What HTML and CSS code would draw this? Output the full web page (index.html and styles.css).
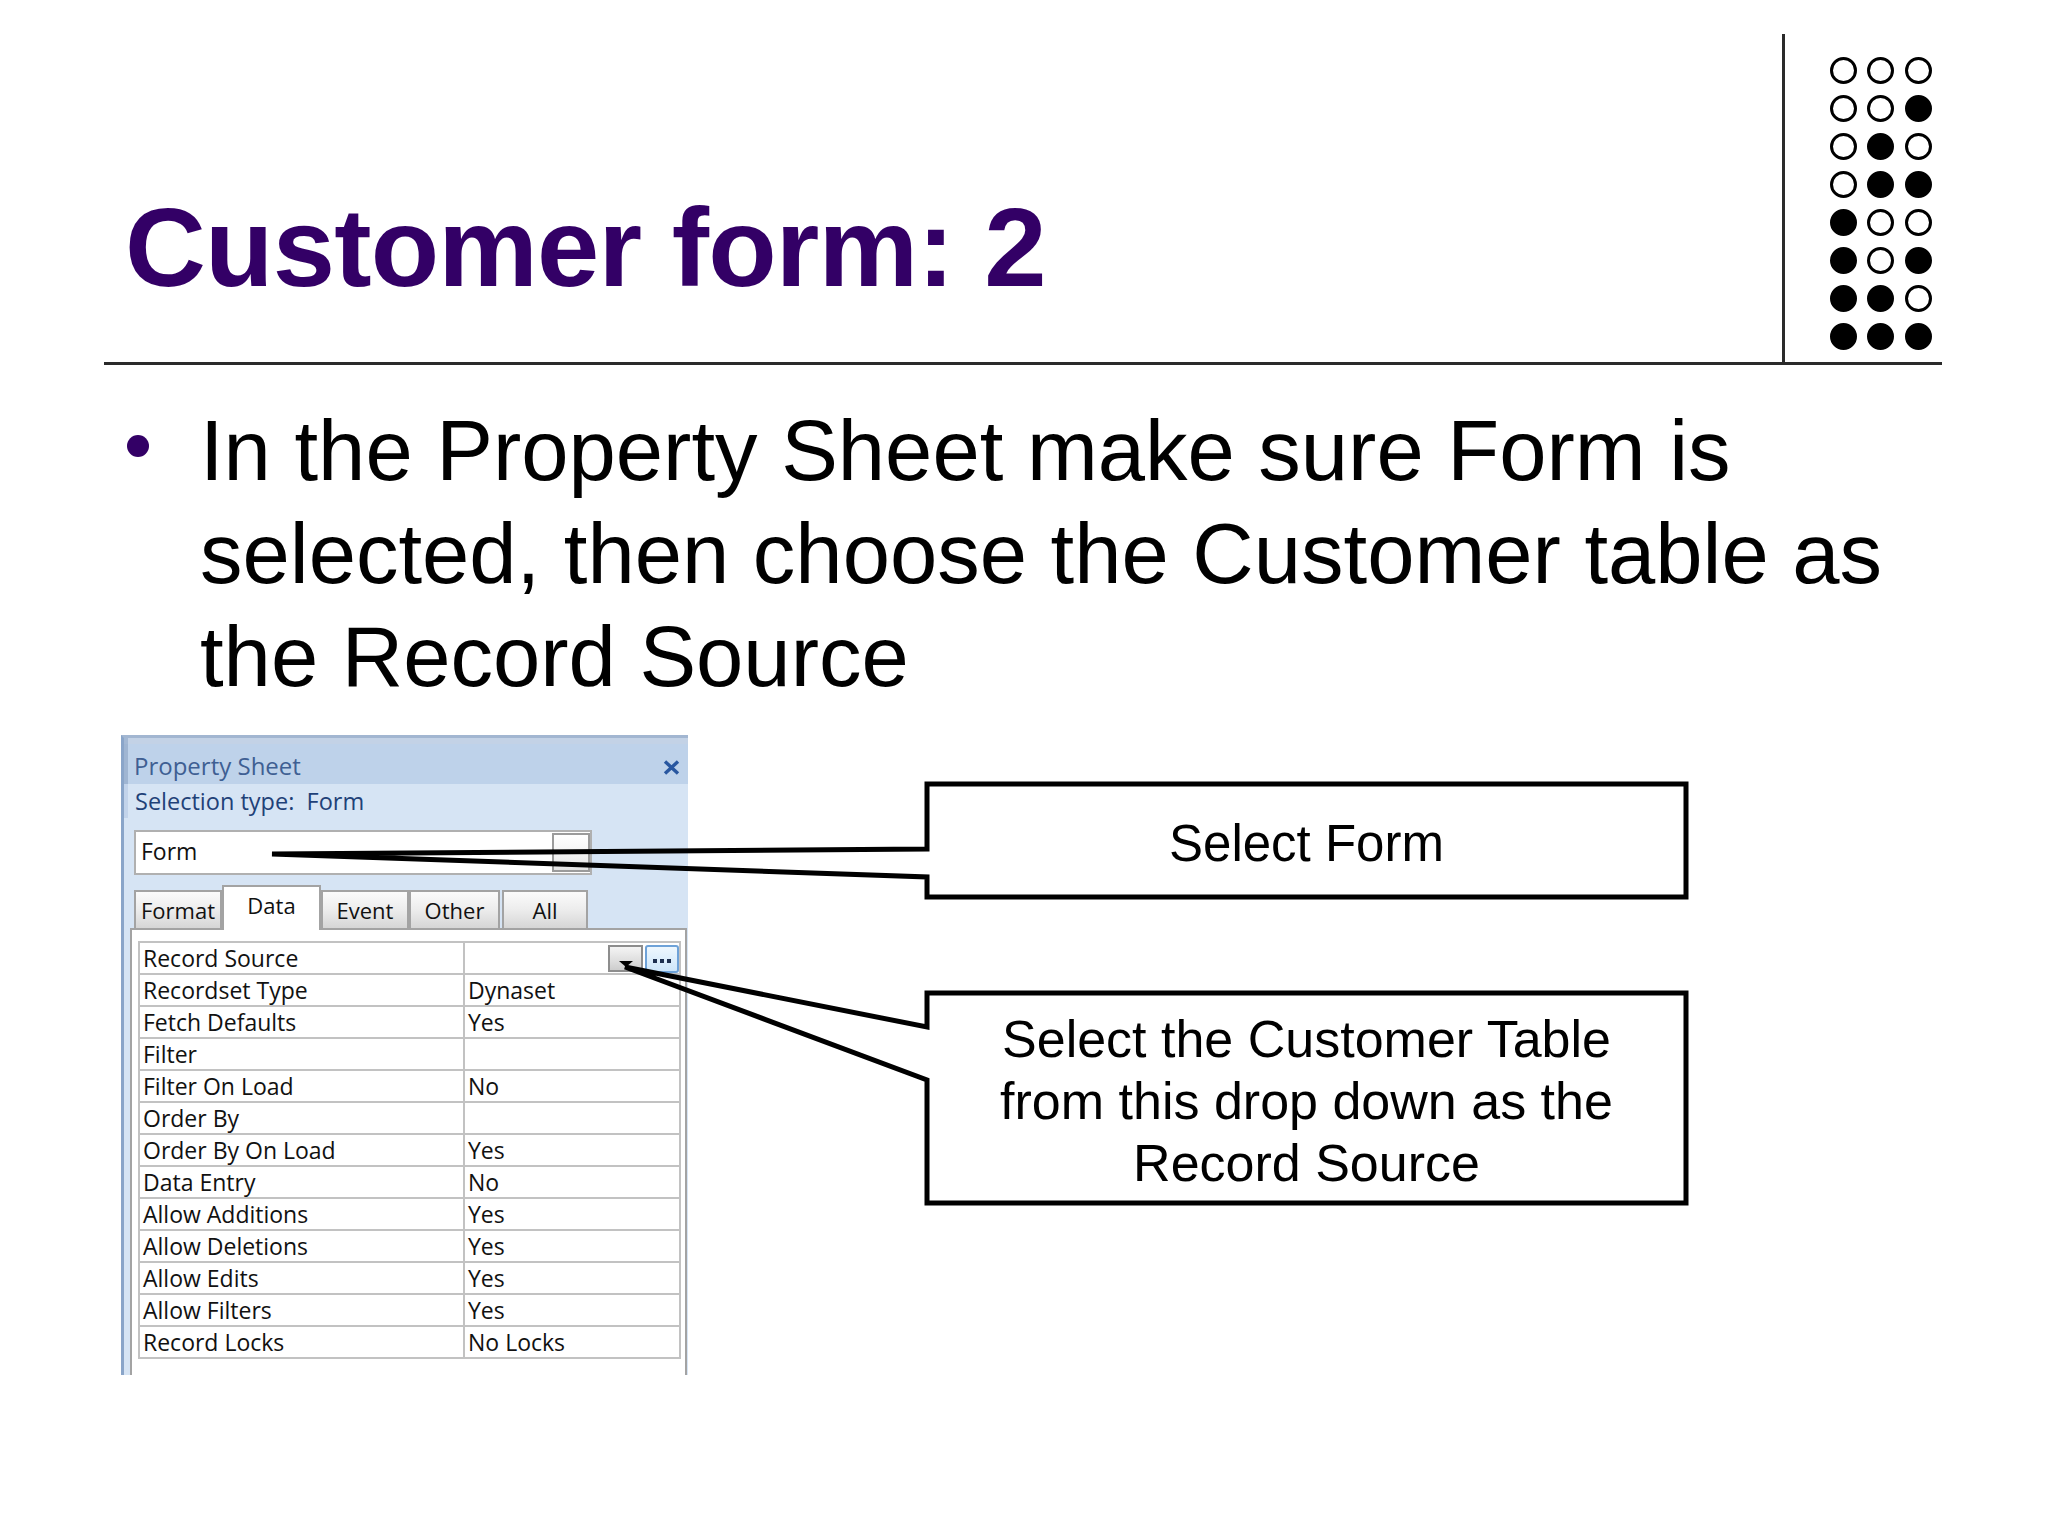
FILE: index.html
```html
<!DOCTYPE html>
<html lang="en">
<head>
<meta charset="utf-8">
<title>Customer form: 2</title>
<link rel="stylesheet" href="styles.css">
</head>
<body>
<div class="slide">
  <header class="header">
    <div class="title-area"><h1 class="title">Customer form: 2</h1></div>
    <div class="vrule"></div>
    <div class="dots">
      <span class="dot"></span><span class="dot"></span><span class="dot"></span>
      <span class="dot"></span><span class="dot"></span><span class="dot on"></span>
      <span class="dot"></span><span class="dot on"></span><span class="dot"></span>
      <span class="dot"></span><span class="dot on"></span><span class="dot on"></span>
      <span class="dot on"></span><span class="dot"></span><span class="dot"></span>
      <span class="dot on"></span><span class="dot"></span><span class="dot on"></span>
      <span class="dot on"></span><span class="dot on"></span><span class="dot"></span>
      <span class="dot on"></span><span class="dot on"></span><span class="dot on"></span>
    </div>
  </header>

  <div class="bullet-item">
    <span class="bullet"></span>
    <p class="bullet-text">In the Property Sheet make sure Form is selected, then choose the Customer table as the Record Source</p>
  </div>

  <div class="ps">
    <div class="ps-strip"></div>
    <div class="ps-title">
      <span class="ps-title-text">Property Sheet</span>
      <svg class="ps-close" width="17" height="15" viewBox="0 0 17 15"><path d="M2 1.5 L15 13.5 M15 1.5 L2 13.5" stroke="#2957a0" stroke-width="3.4" fill="none"/></svg>
    </div>
    <div class="ps-sel">Selection type:&nbsp; Form</div>
    <div class="ps-box">
      <span class="ps-box-text">Form</span>
      <span class="ps-box-btn"></span>
    </div>
    <div class="ps-tabs">
      <div class="tab t-format">Format</div>
      <div class="tab active t-data">Data</div>
      <div class="tab t-event">Event</div>
      <div class="tab t-other">Other</div>
      <div class="tab t-all">All</div>
    </div>
    <div class="ps-content">
      <div class="grid">
        <div class="row"><div class="k">Record Source</div><div class="v btns"><span class="dd"><span class="tri"></span></span><span class="ell"><i></i><i></i><i></i></span></div></div>
        <div class="row"><div class="k">Recordset Type</div><div class="v">Dynaset</div></div>
        <div class="row"><div class="k">Fetch Defaults</div><div class="v">Yes</div></div>
        <div class="row"><div class="k">Filter</div><div class="v"></div></div>
        <div class="row"><div class="k">Filter On Load</div><div class="v">No</div></div>
        <div class="row"><div class="k">Order By</div><div class="v"></div></div>
        <div class="row"><div class="k">Order By On Load</div><div class="v">Yes</div></div>
        <div class="row"><div class="k">Data Entry</div><div class="v">No</div></div>
        <div class="row"><div class="k">Allow Additions</div><div class="v">Yes</div></div>
        <div class="row"><div class="k">Allow Deletions</div><div class="v">Yes</div></div>
        <div class="row"><div class="k">Allow Edits</div><div class="v">Yes</div></div>
        <div class="row"><div class="k">Allow Filters</div><div class="v">Yes</div></div>
        <div class="row"><div class="k">Record Locks</div><div class="v">No Locks</div></div>
      </div>
    </div>
  </div>

  <svg class="callouts" width="2048" height="1536" viewBox="0 0 2048 1536">
    <path d="M927 784 H1686 V897 H927 V877 L272 854 L927 849 Z" />
    <path d="M927 993 H1686 V1203 H927 V1080 L625 967 L927 1027 Z" />
  </svg>
  <div class="callout-text c1">Select Form</div>
  <div class="callout-text c2">Select the Customer Table from this drop down as the Record Source</div>
</div>
</body>
</html>
```

FILE: styles.css
```css
html, body {
  margin: 0;
  padding: 0;
  background: #ffffff;
}

.slide {
  position: relative;
  width: 2048px;
  height: 1536px;
  overflow: hidden;
  background: #ffffff;
  font-family: "Liberation Sans", Arial, sans-serif;
}

/* Header */
.header {
  display: flex;
  margin-left: 104px;
  width: 1838px;
  height: 365px;
  box-sizing: border-box;
  border-bottom: 3px solid #2a2a2a;
}

.title-area {
  width: 1678px;
  flex: none;
  box-sizing: border-box;
  padding-left: 21px;
}

.title {
  margin: 0;
  padding-top: 192px;
  font-family: "Liberation Sans", Arial, sans-serif;
  font-weight: bold;
  font-size: 112px;
  line-height: 112px;
  letter-spacing: -0.8px;
  color: #330066;
  white-space: nowrap;
}

.vrule {
  width: 3px;
  flex: none;
  margin-top: 34px;
  background: #2a2a2a;
}

.dots {
  display: grid;
  grid-template-columns: repeat(3, 27px);
  grid-auto-rows: 27px;
  column-gap: 10.5px;
  row-gap: 11px;
  margin-left: 44.5px;
  margin-top: 56.5px;
  align-self: flex-start;
}

.dot {
  box-sizing: border-box;
  border: 3px solid #000;
  border-radius: 50%;
  background: #fff;
}

.dot.on {
  background: #000;
}

/* Bullet */
.bullet-item {
  display: flex;
  margin-top: 34px;
}

.bullet {
  flex: none;
  width: 22px;
  height: 22px;
  border-radius: 50%;
  background: #330066;
  margin-left: 127px;
  margin-top: 36px;
}

.bullet-text {
  margin: 0 0 0 51px;
  width: 1720px;
  font-family: "Liberation Sans", Arial, sans-serif;
  font-size: 85px;
  line-height: 103px;
  color: #000;
}

/* Property sheet */
.ps {
  margin: 27px 0 0 121px;
  width: 567px;
  height: 640px;
  box-sizing: border-box;
  border-top: 3px solid #a2b6d1;
  border-left: 3px solid #8aa5c9;
  background: #d6e4f4;
  font-family: "Open Sans", "Noto Sans", sans-serif;
  overflow: hidden;
}

.ps-strip {
  height: 6px;
  background: #c3d2e6;
  box-shadow: inset 4px 0 0 #a3b8d4;
}

.ps-title {
  height: 40px;
  box-sizing: border-box;
  padding: 3px 8px 0 10px;
  display: flex;
  justify-content: space-between;
  align-items: center;
  background: #bed2ea;
  box-shadow: inset 4px 0 0 #9fb5d2;
}

.ps-title-text {
  font-size: 24px;
  line-height: 37px;
  color: #3f5f93;
}

.ps-close {
  display: block;
  margin-top: 4px;
}

.ps-sel {
  height: 34px;
  line-height: 34px;
  padding-left: 11px;
  font-size: 23.5px;
  color: #1f4178;
  white-space: nowrap;
  box-shadow: inset 4px 0 0 #c2d3ea;
}

.ps-box {
  margin: 12px 0 0 10px;
  width: 458px;
  height: 45px;
  box-sizing: border-box;
  border: 2px solid #b0b0b0;
  background: #fff;
  display: flex;
  padding: 1px 0;
}

.ps-box-text {
  flex: 1;
  padding-left: 5px;
  font-size: 23px;
  line-height: 37px;
  color: #111;
}

.ps-box-btn {
  width: 38px;
  box-sizing: border-box;
  border: 2px solid #9b9b9b;
  background: linear-gradient(#ffffff, #f3f3f3 55%, #e3e3e3);
}

.ps-tabs {
  display: flex;
  align-items: flex-end;
  height: 43px;
  margin: 10px 0 0 10px;
  position: relative;
  z-index: 1;
}

.tab {
  box-sizing: border-box;
  height: 38px;
  border: 2px solid #a3a3a3;
  border-bottom: none;
  background: linear-gradient(#fbfbfb, #ececec 50%, #d6d6d6);
  text-align: center;
  font-size: 22px;
  line-height: 36px;
  color: #111;
}

.tab.active {
  height: 45px;
  margin-bottom: -2px;
  background: #fff;
  line-height: 37px;
}

.t-format { width: 88px; }
.t-data { width: 99px; }
.t-event { width: 88px; }
.t-other { width: 91px; }
.t-all { width: 86px; margin-left: 2px; }

.ps-content {
  margin-left: 6px;
  width: 557px;
  height: 447px;
  box-sizing: border-box;
  border: 2px solid #a3a3a3;
  border-bottom: none;
  background: #fff;
  padding: 11px 0 0 6px;
}

.grid {
  width: 543px;
  box-sizing: border-box;
  border: 2px solid #c2c2c2;
  border-bottom: none;
}

.row {
  display: flex;
  height: 32px;
  box-sizing: border-box;
  border-bottom: 2px solid #c2c2c2;
  font-size: 23px;
  line-height: 29px;
  color: #111;
}

.k {
  width: 325px;
  flex: none;
  box-sizing: border-box;
  border-right: 2px solid #c2c2c2;
  padding: 1px 0 0 3px;
  white-space: nowrap;
}

.v {
  flex: 1;
  padding: 1px 0 0 3px;
  white-space: nowrap;
}

.v.btns {
  display: flex;
  justify-content: flex-end;
  align-items: flex-start;
  gap: 2px;
  padding: 2px 0 0 0;
}

.dd {
  width: 35px;
  height: 27px;
  box-sizing: border-box;
  border: 2px solid #8d8d8d;
  background: linear-gradient(#f4f4f4, #dedede 60%, #cdcdcd);
  display: flex;
  justify-content: center;
  align-items: flex-end;
  padding-bottom: 3px;
}

.tri {
  width: 0;
  height: 0;
  border-left: 7px solid transparent;
  border-right: 7px solid transparent;
  border-top: 6px solid #000;
}

.ell {
  width: 34px;
  height: 28px;
  box-sizing: border-box;
  border: 2px solid #6ea2d8;
  border-radius: 3px;
  background: linear-gradient(#eef7fe, #cde6fa);
  display: flex;
  justify-content: center;
  align-items: center;
  gap: 3px;
  padding-top: 3px;
}

.ell i {
  display: block;
  width: 4px;
  height: 4px;
  background: #1d2f4f;
}

/* Callouts */
.callouts {
  position: absolute;
  left: 0;
  top: 0;
  pointer-events: none;
}

.callouts path {
  fill: none;
  stroke: #000;
  stroke-width: 5;
  stroke-linejoin: miter;
  stroke-miterlimit: 4;
}

.callout-text {
  position: absolute;
  left: 927px;
  width: 759px;
  box-sizing: border-box;
  display: flex;
  align-items: center;
  justify-content: center;
  text-align: center;
  font-family: "Liberation Sans", Arial, sans-serif;
  color: #000;
}

.c1 {
  top: 784px;
  height: 113px;
  padding-top: 5px;
  font-size: 51px;
  line-height: 61px;
}

.c2 {
  top: 993px;
  height: 210px;
  padding: 6px 50px 0;
  font-size: 52px;
  line-height: 62px;
}
```
